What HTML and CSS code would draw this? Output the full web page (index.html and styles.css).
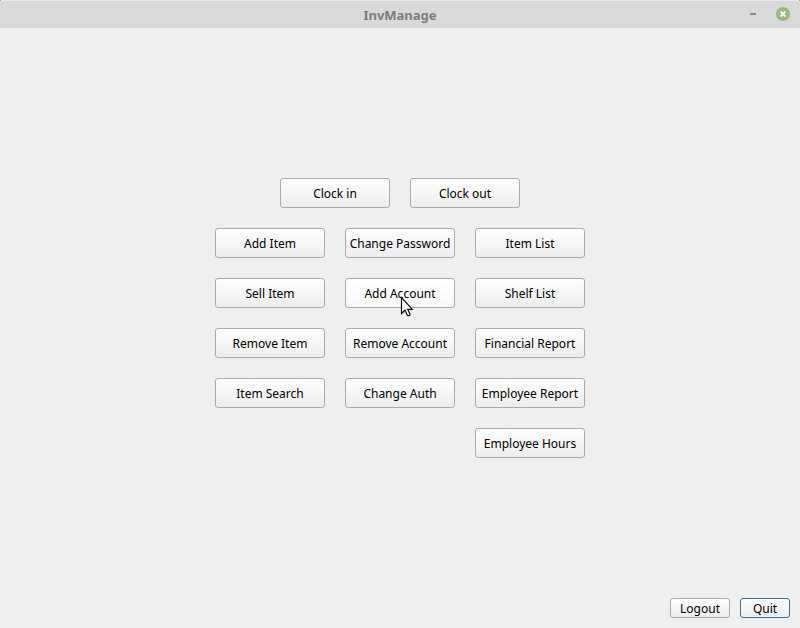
FILE: index.html
```html
<!DOCTYPE html>
<html lang="en">
<head>
<meta charset="utf-8">
<title>InvManage</title>
<link rel="stylesheet" href="styles.css">
</head>
<body>
<header class="titlebar">
  <h1 class="title">InvManage</h1>
  <div class="window-controls">
    <button class="control" type="button" aria-label="Minimize"><svg width="16" height="16" viewBox="0 0 16 16"><path d="M5 8h6" stroke="#8a8a8a" stroke-width="2"/></svg></button>
    <button class="control" type="button" aria-label="Close"><svg width="16" height="16" viewBox="0 0 16 16"><circle cx="8" cy="8" r="7" fill="#9ab87c"/><path d="M5.5 5.5l5 5M10.5 5.5l-5 5" stroke="#fff" stroke-width="2"/></svg></button>
  </div>
</header>
<main class="menu">
  <div class="clock-row">
    <button class="btn" type="button">Clock in</button>
    <button class="btn" type="button">Clock out</button>
  </div>
  <div class="columns">
    <div class="column">
      <button class="btn" type="button">Add Item</button>
      <button class="btn" type="button">Sell Item</button>
      <button class="btn" type="button">Remove Item</button>
      <button class="btn" type="button">Item Search</button>
    </div>
    <div class="column">
      <button class="btn" type="button">Change Password</button>
      <button class="btn btn-hover" type="button">Add Account<svg class="cursor" width="14" height="22" viewBox="0 0 14 22"><path d="M2.3 3v16l3.7-3.6 2.6 5.4 2.6-1.2-2.6-5.1h4z" fill="#000" opacity=".15"/><path d="M1.5 1.5v16l3.5-3.4 2.4 5.4q2 .6 2.7-1.1l-2.4-5.1h4.6z" fill="#fff" stroke="#111" stroke-width="1.2"/></svg></button>
      <button class="btn" type="button">Remove Account</button>
      <button class="btn" type="button">Change Auth</button>
    </div>
    <div class="column">
      <button class="btn" type="button">Item List</button>
      <button class="btn" type="button">Shelf List</button>
      <button class="btn" type="button">Financial Report</button>
      <button class="btn" type="button">Employee Report</button>
      <button class="btn" type="button">Employee Hours</button>
    </div>
  </div>
</main>
<footer class="actions">
  <button class="btn btn-small btn-logout" type="button">Logout</button>
  <button class="btn btn-small btn-default" type="button">Quit</button>
</footer>
</body>
</html>
```
FILE: styles.css
```css
* { box-sizing: border-box; }
html { background: #606060; }
body {
  margin: 0;
  min-height: 100vh;
  display: flex;
  flex-direction: column;
  background: #efefef;
  border-radius: 2px 2px 0 0;
  color: #000;
  font-family: "Noto Sans", sans-serif;
  font-size: 12px;
}
.titlebar {
  display: grid;
  grid-template-columns: 1fr auto 1fr;
  align-items: center;
  height: 28px;
  padding: 0 9px;
  background: #d9d9d9;
  border-radius: 2px 2px 0 0;
  box-shadow: inset 0 1px #e9e9e9;
}
.title {
  grid-column: 2;
  margin: 0;
  font-size: 13px;
  line-height: 20px;
  padding-top: 2px;
  font-weight: 700;
  color: #7c7c7c;
}
.window-controls { display: flex; justify-content: flex-end; gap: 14px; }
.control { display: flex; padding: 0; border: 0; background: none; }
.menu {
  flex: 1;
  display: flex;
  flex-direction: column;
  align-items: center;
  gap: 20px;
  padding-top: 150px;
}
.clock-row, .columns { display: flex; gap: 20px; }
.column { display: flex; flex-direction: column; gap: 20px; }
.btn {
  position: relative;
  width: 110px;
  height: 30px;
  padding: 2px 0 0;
  border: 1px solid #ababab;
  border-radius: 3px;
  background: linear-gradient(#fefefe, #ededed);
  color: #000;
  font: inherit;
  line-height: 16px;
  white-space: nowrap;
}
.btn-hover { background: linear-gradient(#fff, #f7f7f7); }
.cursor { position: absolute; left: 54px; top: 17px; z-index: 1; }
.actions { display: flex; justify-content: flex-end; gap: 10px; padding: 10px; }
.btn-small { width: 50px; height: 20px; }
.btn-logout { width: 60px; }
.btn-default { border-color: #2777a8; }
```
